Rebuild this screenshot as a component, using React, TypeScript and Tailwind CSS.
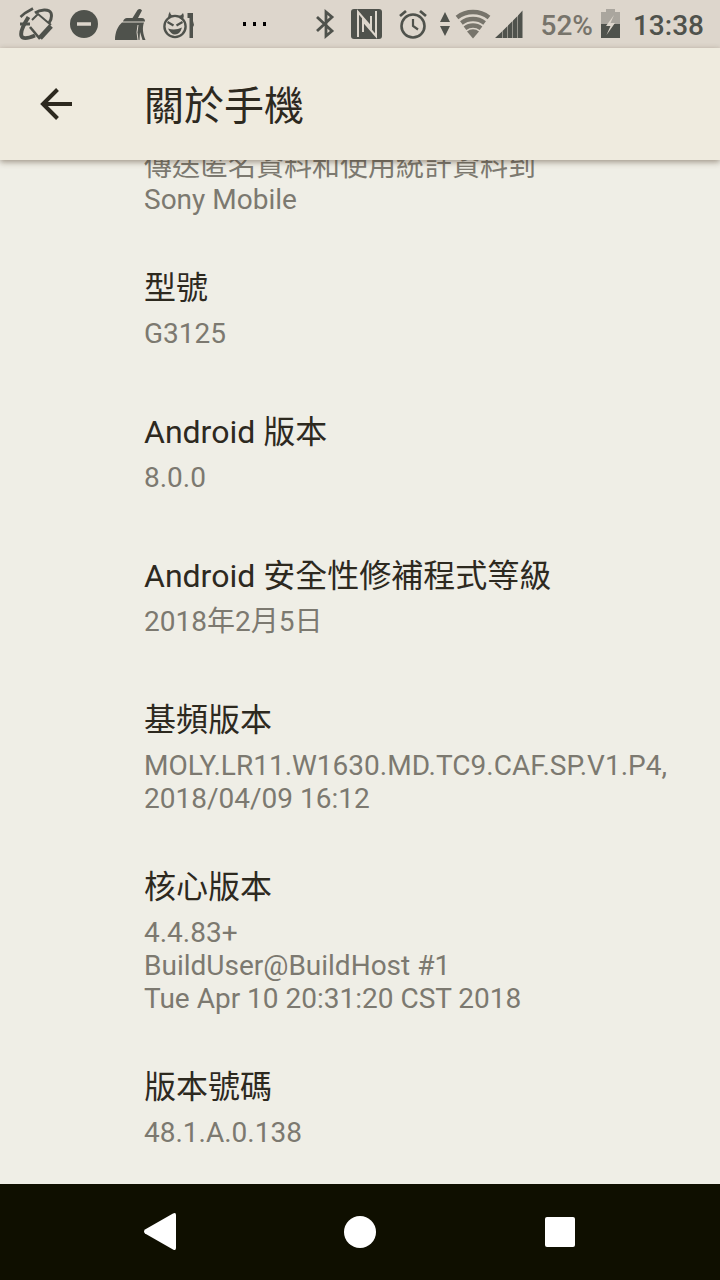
import React from 'react';

type InfoItem = {
  title: string;
  lines: string[];
};

const items: InfoItem[] = [
  { title: '型號', lines: ['G3125'] },
  { title: 'Android 版本', lines: ['8.0.0'] },
  { title: 'Android 安全性修補程式等級', lines: ['2018年2月5日'] },
  { title: '基頻版本', lines: ['MOLY.LR11.W1630.MD.TC9.CAF.SP.V1.P4,', '2018/04/09 16:12'] },
  { title: '核心版本', lines: ['4.4.83+', 'BuildUser@BuildHost #1', 'Tue Apr 10 20:31:20 CST 2018'] },
  { title: '版本號碼', lines: ['48.1.A.0.138'] },
];

const NotificationIcons: React.FC = () => (
  <div className="flex items-center gap-4 text-[#4f524c]">
    {/* Sketch */}
    <svg className="w-9 h-9" viewBox="0 0 36 36" fill="none" stroke="currentColor">
      <path d="M2.5 11L7 7L15 2.5" strokeWidth="2.6" />
      <path d="M17 7C22 3.5 31 2.5 33 7C34 10 33 14 31 17" strokeWidth="3" />
      <path d="M10.5 11C6 18 2 26 3.5 30C5 33.5 11 32 17 29.5" strokeWidth="4" />
      <path d="M2 18H12" strokeWidth="3" />
      <path d="M14 14L20 8L33 19" strokeWidth="2" />
      <path d="M12 21L22 33" strokeWidth="2.6" />
      <path d="M22 32L33 20" strokeWidth="5" />
    </svg>
    {/* Do not disturb */}
    <svg className="w-7 h-7" viewBox="0 0 28 28">
      <circle cx="14" cy="14" r="14" fill="currentColor" />
      <path d="M7 14H21" stroke="#ddd6cc" strokeWidth="3.5" />
    </svg>
    {/* Cleaner */}
    <svg className="w-8 h-8" viewBox="0 0 32 32" fill="currentColor">
      <path d="M18.5 10L23.5 2Q26 0 28 2.5L24 10H28Q31 10 31 13.5H9Q10 10 13 10Z" />
      <path d="M8 14.5H30C28 20 29 26 31.5 32H28.5L26 24L25.5 32H1C1 24 4 18 8 14.5Z" />
      <path d="M24 17Q22 24 24 32" fill="none" stroke="#ddd6cc" strokeWidth="1" />
    </svg>
    {/* Devil face */}
    <svg className="w-8 h-8" viewBox="0 0 32 32" fill="none" stroke="currentColor">
      <circle cx="13" cy="18.5" r="10.6" strokeWidth="2.4" />
      <path d="M6 10Q6 6 8 3.5Q8 7 12 8.5ZM16 8.5Q20 7 21 5Q23 9 20 12Z" fill="currentColor" stroke="none" />
      <path d="M5.5 14L11.5 17.5M20.5 14L14.5 17.5" strokeWidth="2.2" />
      <path d="M6 20.5Q13 23 20 19.5Q18 26.5 13 26.5Q9 26.5 6 20.5Z" fill="currentColor" stroke="none" />
      <path d="M25.5 5H31V13L32 17L31 19V30H27.5V10H25.5Z" fill="currentColor" stroke="none" />
    </svg>
  </div>
);

const SystemIcons: React.FC = () => (
  <div className="flex items-center text-[#4f524c]">
    {/* Bluetooth */}
    <svg className="w-5 h-8 mr-4" viewBox="0 0 20 32" fill="none" stroke="currentColor" strokeWidth="2.8">
      <path d="M2 9L17 23L11 28V4L17 9L2 23" />
    </svg>
    {/* NFC */}
    <svg className="w-8 h-8 mr-4" viewBox="0 0 32 32">
      <rect x="0" y="1" width="31" height="30" rx="3" fill="currentColor" />
      <path d="M7 29V4L20 19V8M25 3V28L12 13V24" fill="none" stroke="#ddd6cc" strokeWidth="2" />
    </svg>
    {/* Alarm */}
    <svg className="w-7 h-8 mr-3" viewBox="0 0 28 32" fill="none" stroke="currentColor">
      <circle cx="14" cy="18" r="11.5" strokeWidth="2.6" />
      <path d="M14 11V18L19 21.5" strokeWidth="2.2" />
      <path d="M1 8L7 3M27 8L21 3" strokeWidth="2.8" />
    </svg>
    {/* Data activity */}
    <svg className="w-3 h-8 mr-1" viewBox="0 0 12 32" fill="currentColor">
      <path d="M6 4L11 14H1ZM1 18H11L6 28Z" />
    </svg>
    {/* Wi-Fi */}
    <svg className="w-9 h-8 mr-1" viewBox="0 0 36 32" fill="none" stroke="#77746b" strokeWidth="4.4">
      <path d="M2 9.5A26 26 0 0 1 34 9.5" />
      <path d="M6.4 15A19 19 0 0 1 29.6 15" />
      <path d="M10 20.2A13 13 0 0 1 26 20.2" />
      <path d="M12 23.5A9 9 0 0 1 24 23.5L18 30.5Z" fill="#77746b" stroke="none" />
    </svg>
    {/* Mobile signal */}
    <svg className="w-7 h-8 mr-[18px]" viewBox="0 0 28 32" fill="currentColor">
      <path d="M0 30L7 23.5V30ZM7.5 23L12.5 18V30H7.5ZM13 17.5L17.5 13V30H13ZM18 12.5L22.5 8V30H18ZM23 7.5L27.5 2.5V30H23Z" />
    </svg>
    <span className="pt-1 text-[28px] leading-8 font-medium text-[#77746b] mr-2">52%</span>
    {/* Battery */}
    <svg className="w-5 h-8 mr-3" viewBox="0 0 20 32">
      <path d="M0 4H5V1H14V4H19V16H0Z" fill="#aaa69e" />
      <path d="M0 16H19V30H0Z" fill="currentColor" />
      <path d="M13 7L5 18H9.5L5.5 27L14 15H9.5Z" fill="#ddd6cc" />
    </svg>
    <span className="pt-1 text-[28px] leading-8 font-medium">13:38</span>
  </div>
);

const StatusBar: React.FC = () => (
  <div className="shrink-0 h-12 bg-[#ddd6cc] pl-[18px] pr-4 flex items-center justify-between">
    <NotificationIcons />
    <svg className="w-6 h-1" viewBox="0 0 24 4" fill="#000">
      <path d="M1 0H4V4H1ZM11 0H14V4H11ZM21 0H24V4H21Z" />
    </svg>
    <SystemIcons />
  </div>
);

const InfoRow: React.FC<{ item: InfoItem }> = ({ item }) => (
  <li className="min-h-36 py-[26px]">
    <h2 className="text-[32px] leading-[41px] text-[#2d291f] mb-2">{item.title}</h2>
    {item.lines.map(line => (
      <p key={line} className="text-[28px] leading-[33px]">{line}</p>
    ))}
  </li>
);

const App: React.FC = () => {
  return (
    <div className="h-screen flex flex-col overflow-hidden bg-[#efeee6] font-[Roboto,'Noto_Sans_CJK_TC',sans-serif]" lang="zh-Hant">
      <StatusBar />
      <header className="shrink-0 h-28 bg-[#efebdf] flex items-center relative z-10 shadow-[0_2px_6px_rgba(60,40,20,0.45)]">
        <button className="ml-8 w-12 h-12 flex items-center justify-center text-[#2d291f]" aria-label="返回">
          <svg className="w-8 h-8" viewBox="0 0 32 32" fill="none" stroke="currentColor" strokeWidth="4">
            <path d="M32 16H3M17.5 1.5L3 16L17.5 30.5" />
          </svg>
        </button>
        <h1 className="ml-16 pt-1.5 text-[40px] leading-[48px] text-[#2d291f]">關於手機</h1>
      </header>
      <main className="flex-1 min-h-0 overflow-hidden pl-36 pr-8 text-[#7c7970]">
        {/* list is scrolled, so the first row starts under the header */}
        <ul className="-mt-[10px]">
          <li className="pb-[26px] text-[28px] leading-[33px]">
            <p>傳送匿名資料和使用統計資料到</p>
            <p>Sony Mobile</p>
          </li>
          {items.map(item => (
            <InfoRow key={item.title} item={item} />
          ))}
        </ul>
      </main>
      <nav className="shrink-0 h-24 bg-[#0f0f00] text-white px-[60px] flex items-center">
        <button className="flex-1 h-full flex items-center justify-center" aria-label="返回上一頁">
          <svg className="w-8 h-10" viewBox="0 0 32 40" fill="currentColor">
            <path d="M29 1.5Q32 0 32 3V36Q32 39 29 37.5L1 21.5Q-1 19.5 1 17.5Z" />
          </svg>
        </button>
        <button className="flex-1 h-full flex items-center justify-center" aria-label="主畫面">
          <span className="w-8 h-8 rounded-full bg-white" />
        </button>
        <button className="flex-1 h-full flex items-center justify-center" aria-label="最近使用">
          <span className="w-[30px] h-[30px] rounded-xs bg-white" />
        </button>
      </nav>
    </div>
  );
};

export default App;
